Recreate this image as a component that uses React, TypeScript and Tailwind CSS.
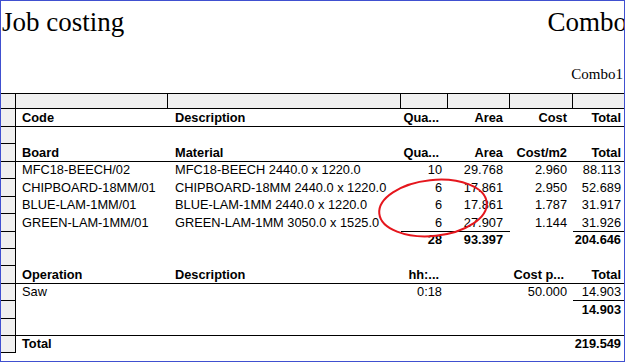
import React from 'react';

type Row = {
  h: 17 | 18;
  cells: string[];
  bold?: boolean;
  lines?: number[];
};

const ALL = [0, 1, 2, 3, 4, 5];

const rows: Row[] = [
  { h: 18, cells: ['Code', 'Description', 'Qua...', 'Area', 'Cost', 'Total'], bold: true, lines: ALL },
  { h: 17, cells: [] },
  { h: 18, cells: ['Board', 'Material', 'Qua...', 'Area', 'Cost/m2', 'Total'], bold: true, lines: ALL },
  { h: 17, cells: ['MFC18-BEECH/02', 'MFC18-BEECH 2440.0 x 1220.0', '10', '29.768', '2.960', '88.113'] },
  { h: 18, cells: ['CHIPBOARD-18MM/01', 'CHIPBOARD-18MM 2440.0 x 1220.0', '6', '17.861', '2.950', '52.689'] },
  { h: 17, cells: ['BLUE-LAM-1MM/01', 'BLUE-LAM-1MM 2440.0 x 1220.0', '6', '17.861', '1.787', '31.917'] },
  { h: 18, cells: ['GREEN-LAM-1MM/01', 'GREEN-LAM-1MM 3050.0 x 1525.0', '6', '27.907', '1.144', '31.926'], lines: [2, 3, 5] },
  { h: 17, cells: ['', '', '28', '93.397', '', '204.646'], bold: true },
  { h: 17, cells: [] },
  { h: 18, cells: ['Operation', 'Description', 'hh:...', '', 'Cost p...', 'Total'], bold: true, lines: ALL },
  { h: 17, cells: ['Saw', '', '0:18', '', '50.000', '14.903'], lines: [5] },
  { h: 18, cells: ['', '', '', '', '', '14.903'], bold: true },
  { h: 17, cells: [], lines: ALL },
  { h: 17, cells: ['Total', '', '', '', '', '219.549'], bold: true },
];

// column widths + text alignment, same for the header strip and the body
const cols = [
  'w-[152px] shrink-0 pl-[6px] justify-start',
  'w-[233px] shrink-0 pl-[7px] justify-start',
  'w-[47px] shrink-0 pr-[6px] justify-end',
  'w-[62px] shrink-0 pr-[7px] justify-end',
  'w-[63px] shrink-0 pr-[6px] justify-end',
  'flex-1 pr-[3px] justify-end',
];

const headCols = ['w-[152px]', 'w-[233px]', 'w-[47px]', 'w-[62px]', 'w-[63px]'];

const App: React.FC = () => {
  return (
    <div className="w-[626px] h-[362px] bg-white">
      <div className="relative w-[625px] h-[362px] border border-[#4050d0] overflow-hidden font-['Liberation_Sans',Arial,sans-serif] text-[12.8px] text-black">
        {/* Report title */}
        <div className="flex justify-between pt-[8px] pl-[1px] font-['Liberation_Serif','Times_New_Roman',serif] text-[27px] leading-[27px] whitespace-nowrap">
          <span>Job costing</span>
          <span className="mr-[-3px]">Combo</span>
        </div>
        <div className="mt-[31px] h-[15px] text-right pr-[1px] font-['Liberation_Serif','Times_New_Roman',serif] text-[15px] leading-[15px]">
          Combo1
        </div>

        {/* Grid */}
        <div className="mt-[11px]">
          <div className="flex h-[16px] border-y border-black bg-[#f0f0f0]">
            <div className="w-[15px] shrink-0 border-r border-black" />
            {headCols.map((c, i) => (
              <div key={i} className={`${c} shrink-0 border-r border-black`} />
            ))}
            <div className="flex-1" />
          </div>

          {rows.map((r, ri) => (
            <div key={ri} className={`flex ${r.h === 18 ? 'h-[18px]' : 'h-[17px]'} ${r.bold ? 'font-bold' : ''}`}>
              <div className="w-[15px] shrink-0 border-r border-b border-black bg-[#f0f0f0]" />
              {cols.map((c, ci) => {
                const text = r.cells[ci] ?? '';
                const underlined = r.lines?.includes(ci);
                return (
                  <div
                    key={ci}
                    className={`${c} flex items-center whitespace-nowrap overflow-hidden border-b ${underlined ? 'border-black' : 'border-transparent'}`}
                  >
                    <span className={text.endsWith('...') ? 'mr-[3px]' : ''}>{text}</span>
                  </div>
                );
              })}
            </div>
          ))}
        </div>

        {/* hand-drawn red ring */}
        <svg className="absolute left-[369px] top-[170px] pointer-events-none" width="126" height="76" viewBox="0 0 126 76">
          <ellipse cx="63" cy="37" rx="54" ry="28" fill="none" stroke="#e5161d" strokeWidth="2" transform="rotate(-6 63 37)" />
        </svg>
      </div>
    </div>
  );
};

export default App;
